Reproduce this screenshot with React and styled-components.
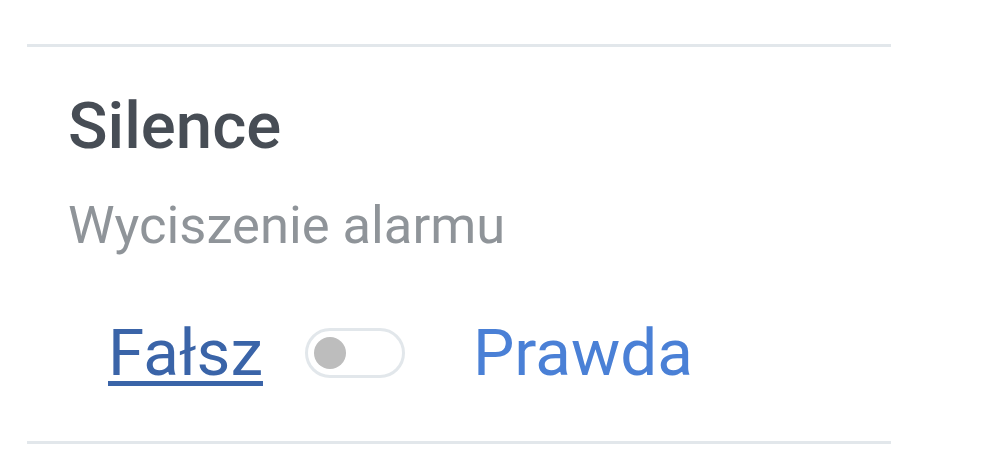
import React, { useState } from "react";
import styled, { createGlobalStyle } from "styled-components";

const GlobalStyle = createGlobalStyle`
  html, body {
    margin: 0;
    padding: 0;
    background: #ffffff;
    font-family: Roboto, "Noto Sans", sans-serif;
  }
`;

const Page = styled.div`
  width: 864px;
  margin-left: 27px;
  padding-top: 44px;
`;

const Divider = styled.div`
  height: 3px;
  background-color: #e2e7eb;
`;

const Setting = styled.div`
  padding: 46px 0 56px 41px;
`;

const Title = styled.div`
  font-size: 65.3px;
  font-weight: 500;
  line-height: 1;
  color: #474d55;
`;

const Description = styled.div`
  margin-top: 41px;
  font-size: 52.5px;
  line-height: 1;
  color: #8f9499;
`;

const Switcher = styled.div`
  display: flex;
  align-items: center;
  margin-top: 68px;
  padding-left: 40px;
`;

const Option = styled.span`
  font-size: 65.6px;
  line-height: 1;
  color: ${(p) => (p.$active ? "#3a64a8" : "#4a80d6")};
  text-decoration: ${(p) => (p.$active ? "underline" : "none")};
  text-decoration-thickness: 5px;
  text-underline-offset: 6px;
  cursor: pointer;
`;

const Track = styled.button`
  box-sizing: border-box;
  width: 100px;
  height: 50px;
  margin: 0 68px 0 42px;
  padding: 0 6px;
  display: flex;
  align-items: center;
  justify-content: ${(p) => (p.$on ? "flex-end" : "flex-start")};
  border: 3px solid #e2e7eb;
  border-radius: 25px;
  background: #ffffff;
  cursor: pointer;
`;

const Thumb = styled.span`
  width: 32px;
  height: 32px;
  border-radius: 50%;
  background-color: ${(p) => (p.$on ? "#4a80d6" : "#bdbdbd")};
`;

export default function App() {
  const [on, setOn] = useState(false);
  return (
    <Page>
      <GlobalStyle />
      <Divider />
      <Setting>
        <Title>Silence</Title>
        <Description>Wyciszenie alarmu</Description>
        <Switcher>
          <Option $active={!on} onClick={() => setOn(false)}>
            Fałsz
          </Option>
          <Track $on={on} onClick={() => setOn(!on)}>
            <Thumb $on={on} />
          </Track>
          <Option $active={on} onClick={() => setOn(true)}>
            Prawda
          </Option>
        </Switcher>
      </Setting>
      <Divider />
    </Page>
  );
}
